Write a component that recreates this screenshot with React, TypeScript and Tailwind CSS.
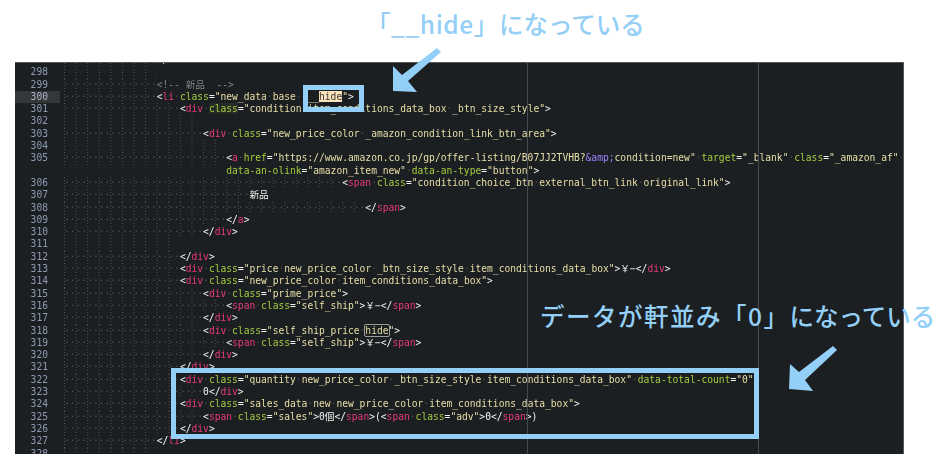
import type { ReactNode } from "react";

type Row = { n?: number; indent: number; text?: string };

const rows: Row[] = [
  { n: 297, indent: 16, text: "</li>" },
  { n: 298, indent: 16 },
  { n: 299, indent: 16, text: "<!-- 新品  -->" },
  { n: 300, indent: 16, text: '<li class="new_data base  __hide">' },
  { n: 301, indent: 20, text: '<div class="condition item_conditions_data_box _btn_size_style">' },
  { n: 302, indent: 24 },
  { n: 303, indent: 24, text: '<div class="new_price_color _amazon_condition_link_btn_area">' },
  { n: 304, indent: 28 },
  { n: 305, indent: 28, text: '<a href="https://www.amazon.co.jp/gp/offer-listing/B07JJ2TVHB?&amp;condition=new" target="_blank" class="_amazon_af" ' },
  { indent: 28, text: 'data-an-olink="amazon_item_new" data-an-type="button">' },
  { n: 306, indent: 48, text: '<span class="condition_choice_btn external_btn_link original_link">' },
  { n: 307, indent: 32, text: "新品" },
  { n: 308, indent: 52, text: "</span>" },
  { n: 309, indent: 28, text: "</a>" },
  { n: 310, indent: 24, text: "</div>" },
  { n: 311, indent: 20 },
  { n: 312, indent: 20, text: "</div>" },
  { n: 313, indent: 20, text: '<div class="price new_price_color _btn_size_style item_conditions_data_box">￥−</div>' },
  { n: 314, indent: 20, text: '<div class="new_price_color item_conditions_data_box">' },
  { n: 315, indent: 24, text: '<div class="prime_price">' },
  { n: 316, indent: 28, text: '<span class="self_ship">￥−</span>' },
  { n: 317, indent: 24, text: "</div>" },
  { n: 318, indent: 24, text: '<div class="self_ship_price hide">' },
  { n: 319, indent: 28, text: '<span class="self_ship">￥−</span>' },
  { n: 320, indent: 24, text: "</div>" },
  { n: 321, indent: 20, text: "</div>" },
  { n: 322, indent: 20, text: '<div class="quantity new_price_color _btn_size_style item_conditions_data_box" data-total-count="0">' },
  { n: 323, indent: 24, text: "0</div>" },
  { n: 324, indent: 20, text: '<div class="sales_data new new_price_color item_conditions_data_box">' },
  { n: 325, indent: 24, text: '<span class="sales">0個</span>(<span class="adv">0</span>)' },
  { n: 326, indent: 20, text: "</div>" },
  { n: 327, indent: 16, text: "</li>" },
  { n: 328, indent: 16 },
];

const Dot = () => <span className="text-[#4b5053]">·</span>;

// string value: spaces become dots, &amp; is purple, "hide" gets its marker
function renderString(s: string, n?: number) {
  return s.split(/( |&amp;|(?<![a-z])hide)/).map((p, i) => {
    if (p === " ") return <Dot key={i} />;
    if (p === "&amp;") return <span key={i} className="text-[#9d84ff]">{p}</span>;
    if (p === "hide" && n === 300) return <span key={i} className="bg-[#fbe3bd] text-[#3a3a30]">{p}</span>;
    if (p === "hide" && n === 318) return <span key={i} className="rounded-[1px] outline outline-1 outline-[#9a9d9a]">{p}</span>;
    return p;
  });
}

function renderCode(text: string, n?: number) {
  if (text.startsWith("<!--")) return <span className="text-[#7f8487]">{text}</span>;
  const out: ReactNode[] = [];
  const re = /(<\/?)([a-z]+)|([a-z-]+)(=)("[^"]*")|( )|([^<\s]+?(?=<|\s|$)|>)/g;
  let m: RegExpExecArray | null;
  let k = 0;
  while ((m = re.exec(text))) {
    if (m[1]) {
      out.push(<span key={k++} className="text-[#f4f4f0]">{m[1]}</span>);
      out.push(<span key={k++} className="text-[#e9387f]">{m[2]}</span>);
    } else if (m[3]) {
      out.push(<span key={k++} className={n === 301 ? "bg-[#262c25] text-[#a3cc3f]" : "text-[#a3cc3f]"}>{m[3]}</span>);
      out.push(<span key={k++} className="text-[#f4f4f0]">{m[4]}</span>);
      out.push(<span key={k++} className="text-[#e8dfa8]">{renderString(m[5], n)}</span>);
    } else if (m[6]) {
      out.push(<Dot key={k++} />);
    } else {
      out.push(<span key={k++} className="text-[#f4f4f0]">{m[7]}</span>);
    }
  }
  return out;
}

function CodeRow({ row }: { row: Row }) {
  const active = row.n === 300;
  const dots = row.text && row.n ? "·".repeat(row.indent) : "";
  return (
    <div className="flex h-[12.3px] leading-[12.3px]">
      <div className={`w-[45px] shrink-0 pr-[12px] text-right ${active ? "bg-[#353738] text-[#aab2c4]" : "text-[#8f9bb3]"}`}>
        {row.n}
      </div>
      <div className="ml-[4px] whitespace-pre">
        {row.n ? (
          <span className="inline-block h-[12.3px] align-top bg-[radial-gradient(circle_at_0.5px_0.5px,#4a4e51_0.7px,transparent_0.8px)] bg-[length:11.6px_3px] text-[#4b5053]">
            {dots || " ".repeat(row.indent)}
          </span>
        ) : (
          " ".repeat(row.indent)
        )}
        {row.text && renderCode(row.text, row.n)}
      </div>
    </div>
  );
}

export default function App() {
  return (
    <div className="relative h-[470px] w-[949px] overflow-hidden bg-white">
      <div className="flex h-[62px] items-start pl-[366px] pt-[6px] font-['Noto_Sans_CJK_JP',sans-serif] text-[24.5px] leading-[36px] font-medium whitespace-nowrap text-[#93cff6]">
        <span className="tracking-[0.6px]">「__hide」</span>になっている
      </div>
      <div className="pl-[15px]">
        <div className="relative h-[392px] w-[889px] overflow-hidden border-t border-r border-[#55585b] bg-[#1b1f21] font-['DejaVu_Sans_Mono','Noto_Sans_CJK_JP',monospace] text-[9.63px] blur-[0.35px]">
          <div className="-mt-[9px]">
            {rows.map((row, i) => (
              <CodeRow key={i} row={row} />
            ))}
          </div>
          {/* rulers */}
          <div className="absolute top-0 bottom-0 left-[512px] w-px bg-[#454954]" />
          <div className="absolute top-0 bottom-0 left-[743px] w-px bg-[#454954]" />
        </div>
      </div>

      {/* annotations over the code */}
      <div className="absolute left-[540px] top-[298px] font-['Noto_Sans_CJK_JP',sans-serif] text-[24.5px] leading-[36px] font-medium whitespace-nowrap text-[#93cff6]">
        <span className="tracking-[1.5px]">データが軒並み「0」</span>になっている
      </div>

      <div className="absolute left-[303px] top-[85px] h-[27px] w-[61px] border-[5px] border-[#93cff6]" />
      <div className="absolute left-[171px] top-[368px] h-[71px] w-[588px] border-[5px] border-[#93cff6]" />

      <svg className="absolute left-0 top-0" width="949" height="470" fill="#93cff6">
        <polygon points="437,48 441,52 408,81 417,92 393,91 393,66 402,75" />
        <polygon points="833,346 837,350 805,380 813,391 789,389 790,364 799,372" />
      </svg>
    </div>
  );
}
